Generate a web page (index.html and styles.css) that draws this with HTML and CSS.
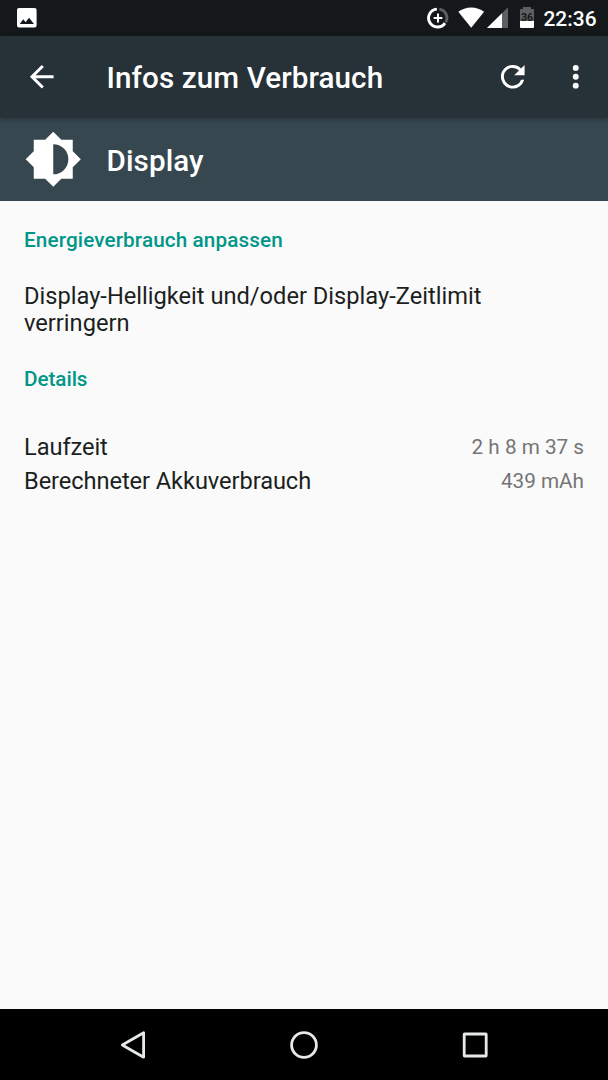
FILE: index.html
```
<!DOCTYPE html>
<html lang="de">
<head>
<meta charset="utf-8">
<title>Infos zum Verbrauch</title>
<link rel="stylesheet" href="styles.css">
</head>
<body>
<div class="screen">
  <div class="status">
    <svg class="status-image" width="20" height="20" viewBox="0 0 20 20"><path fill="#fff" fill-rule="evenodd" d="M2 0h15.6a2 2 0 0 1 2 2v15.6a2 2 0 0 1-2 2H2a2 2 0 0 1-2-2V2a2 2 0 0 1 2-2zM2.7 16H17l-4.9-6.3-3.5 4.6-2.3-3z"/></svg>
    <svg class="status-saver" width="22" height="22" viewBox="0 0 22 22"><g fill="none" stroke-width="2.9"><path stroke="#5d6062" d="M12.3 2.1A9 9 0 0 1 18.8 15.3"/><path stroke="#fff" d="M9.9 2.1A9 9 0 1 0 18 16.2"/><path stroke="#fff" stroke-width="2" d="M11 6.6v8.8M6.6 11h8.8"/></g></svg>
    <svg class="status-wifi" width="27" height="22" viewBox="0 0 27 22"><path fill="#fff" d="M.3 4.8C3.8 2 8.300 .4 13.200 .4S22.600 2 26.100 4.800L13.200 20.800z"/></svg>
    <svg class="status-signal" width="22" height="22" viewBox="0 0 22 22"><path fill="#5d6062" d="M0 21L21 .3V21z"/><path fill="#fff" d="M0 21L15 6.200V21z"/></svg>
    <svg class="status-battery" width="14" height="22" viewBox="0 0 14 22"><path fill="#5d6062" d="M3 0h8v2h2a1 1 0 0 1 1 1v11H0V3a1 1 0 0 1 1-1h2z"/><path fill="#fff" d="M0 14h14v6a1 1 0 0 1-1 1H1a1 1 0 0 1-1-1z"/><text x="7" y="14.300" text-anchor="middle">36</text></svg>
    <span class="clock">22:36</span>
  </div>
  <header class="toolbar">
    <svg class="icon" viewBox="0 0 24 24"><path d="M20 11H7.830l5.590-5.590L12 4l-8 8 8 8 1.410-1.410L7.830 13H20z"/></svg>
    <h1 class="title">Infos zum Verbrauch</h1>
    <svg class="icon refresh" viewBox="0 0 24 24"><path d="M17.650 6.350A7.960 7.960 0 0 0 12 4a8 8 0 1 0 7.730 10h-2.080A6 6 0 1 1 12 6c1.660 0 3.140.690 4.220 1.780L13 11h7V4z"/></svg>
    <svg class="icon more" viewBox="0 0 24 24"><circle cx="12" cy="6" r="2"/><circle cx="12" cy="12" r="2"/><circle cx="12" cy="18" r="2"/></svg>
  </header>
  <section class="entity">
    <svg class="brightness" viewBox="0 0 24 24"><path d="M20 15.310L23.310 12 20 8.690V4h-4.690L12 .690 8.690 4H4v4.690L.690 12 4 15.310V20h4.690L12 23.310 15.310 20H20zM12 18.200V5.800a6.200 6.200 0 0 1 0 12.400z"/></svg>
    <h2 class="title">Display</h2>
  </section>
  <main class="content">
    <h3 class="category">Energieverbrauch anpassen</h3>
    <p class="tip">Display-Helligkeit und/oder Display-Zeitlimit verringern</p>
    <h3 class="category details-title">Details</h3>
    <dl class="details">
      <div class="row"><dt>Laufzeit</dt><dd>2 h 8 m 37 s</dd></div>
      <div class="row"><dt>Berechneter Akkuverbrauch</dt><dd>439 mAh</dd></div>
    </dl>
  </main>
  <nav class="navbar">
    <svg width="30" height="32" viewBox="0 0 30 32"><path d="M25.600 3.800v24.400L4.300 16z"/></svg>
    <svg width="30" height="32" viewBox="0 0 30 32"><circle cx="15" cy="16" r="12.400"/></svg>
    <svg width="30" height="32" viewBox="0 0 30 32"><rect x="4.200" y="5" width="22" height="22" rx=".5"/></svg>
  </nav>
</div>
</body>
</html>
```
FILE: styles.css
```
* { box-sizing: border-box; }
body { margin: 0; font-family: Roboto, "Liberation Sans", sans-serif; }
h1, h2, h3, p, dl, dt, dd { margin: 0; font-weight: 400; }
svg { display: block; flex: none; }

.screen {
  width: 608px;
  height: 1080px;
  display: flex;
  flex-direction: column;
  background: #fafafa;
  overflow: hidden;
}

.status {
  height: 35.5px;
  flex: none;
  display: flex;
  align-items: center;
  padding: 0 11.500px 0 17px;
  background: #14181b;
}
.status-image { margin-right: auto; }
.status-saver { margin-right: 9px; }
.status-wifi { margin-right: 2px; }
.status-signal { margin-right: 11px; }
.status-battery { margin-right: 10px; }
.status-battery text { font-size: 10.500px; font-weight: 700; fill: #14181b; }
.clock {
  width: 53px;
  margin-top: 2px;
  font-size: 20.900px;
  font-weight: 500;
  line-height: 34px;
  color: #fff;
  white-space: nowrap;
}

.toolbar {
  height: 82.500px;
  flex: none;
  display: flex;
  align-items: center;
  padding: 0 14.500px 0 23.500px;
  background: #263238;
  box-shadow: 0 1px 5px rgba(0, 0, 0, .35);
  z-index: 1;
}
.icon { width: 35.500px; height: 35.500px; fill: #fff; }
.toolbar .title { margin: 3px auto 0 47.500px; }
.refresh { margin-right: 27.300px; }

.title {
  font-size: 29.600px;
  font-weight: 500;
  line-height: 36px;
  letter-spacing: .1px;
  color: #fff;
  white-space: nowrap;
}

.entity {
  height: 83px;
  flex: none;
  display: flex;
  align-items: center;
  padding-left: 24px;
  background: #37474f;
}
.brightness { width: 58.500px; height: 58.500px; fill: #fff; }
.entity .title { margin: 2px 0 0 24px; }

.content { flex: 1; padding: 25px 24px 0; }
.category {
  font-size: 20.700px;
  font-weight: 500;
  line-height: 28px;
  letter-spacing: .12px;
  color: #009688;
}
.details-title { letter-spacing: -.05px; }
.tip {
  margin: 29px 0 28px;
  font-size: 23.650px;
  line-height: 27.200px;
  color: #1b1f21;
}
.details { margin-top: 36.400px; }
.row {
  height: 34px;
  display: flex;
  align-items: center;
  justify-content: space-between;
}
.row dt { font-size: 23.650px; letter-spacing: -.08px; color: #1b1f21; }
.row dd { margin-top: 1px; font-size: 20.700px; color: #757575; }

.navbar {
  height: 71px;
  flex: none;
  display: flex;
  align-items: center;
  justify-content: space-between;
  padding: 0 118px;
  background: #000;
}
.navbar svg { fill: none; stroke: #e6e9e9; stroke-width: 2.800; stroke-linejoin: round; }
```
